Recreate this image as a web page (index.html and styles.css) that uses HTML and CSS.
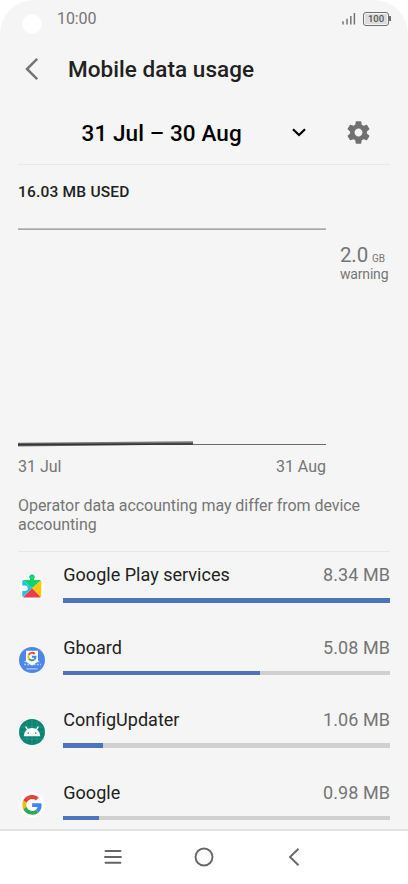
FILE: index.html
```html
<!DOCTYPE html>
<html lang="en">
<head>
<meta charset="utf-8">
<title>Mobile data usage</title>
<link rel="stylesheet" href="styles.css">
</head>
<body>
<div class="phone">
  <header class="status">
    <span class="camera"></span>
    <span class="clock">10:00</span>
    <svg class="signal" width="14" height="13" viewBox="0 0 14 13"><path d="M1 9.200V12.500M5 6.800V12.500M8.800 4V12.500M12.400 1V12.500" fill="none" stroke="#747474" stroke-width="1.500"/></svg>
    <span class="battery"><span class="charge">100</span></span>
  </header>
  <div class="titlebar">
    <svg class="back" width="14" height="24" viewBox="0 0 14 24"><path d="M13.200 1.800L3 12L13.200 22.200" fill="none" stroke="#757575" stroke-width="2.500"/></svg>
    <h1>Mobile data usage</h1>
  </div>
  <div class="cycle">
    <span class="range">31 Jul – 30 Aug</span>
    <svg class="chevron" width="14" height="9" viewBox="0 0 14 9"><path d="M1 1.200L7 7L13 1.200" fill="none" stroke="#000" stroke-width="2.200"/></svg>
    <svg class="gear" width="27" height="27" viewBox="0 0 24 24"><path fill="#707070" d="M19.430 12.980c.04-.32.07-.64.07-.98s-.03-.66-.07-.98l2.110-1.650c.19-.15.24-.42.12-.64l-2-3.460c-.12-.22-.39-.3-.61-.22l-2.490 1c-.52-.4-1.080-.73-1.690-.98l-.38-2.650C14.460 2.180 14.250 2 14 2h-4c-.25 0-.46.18-.49.42l-.38 2.650c-.61.25-1.170.59-1.690.98l-2.490-1c-.23-.09-.49 0-.61.22l-2 3.460c-.13.22-.07.49.12.64l2.110 1.650c-.04.32-.07.65-.07.98s.03.66.07.98l-2.110 1.650c-.19.15-.24.42-.12.64l2 3.460c.12.22.39.3.61.22l2.490-1c.52.4 1.080.73 1.690.98l.38 2.650c.03.24.24.42.49.42h4c.25 0 .46-.18.49-.42l.38-2.650c.61-.25 1.170-.59 1.690-.98l2.490 1c.23.09.49 0 .61-.22l2-3.460c.12-.22.07-.49-.12-.64l-2.110-1.650zM12 15.500c-1.930 0-3.500-1.570-3.500-3.500s1.570-3.500 3.500-3.500 3.500 1.570 3.500 3.500-1.570 3.500-3.500 3.500z"/></svg>
  </div>
  <section class="usage">
    <div class="used">16.03 MB USED</div>
    <div class="plot">
      <svg class="graph" width="308" height="220" viewBox="0 0 308 220"><path d="M0 2.200H308" stroke="#8c8c8c" stroke-width="1.300"/><path d="M0 217.500H308" stroke="#6b6b6b" stroke-width="1"/><path d="M0 215.800L175 214.200V217.600L0 219.500Z" fill="#777"/><path d="M0 216.800L175 216.200V217.700L0 218.500Z" fill="#333"/></svg>
      <div class="limit"><div><span class="amount">2.0</span> <span class="unit">GB</span></div><div class="warning">warning</div></div>
    </div>
    <div class="dates"><span>31 Jul</span><span>31 Aug</span></div>
    <p class="note">Operator data accounting may differ from device accounting</p>
  </section>
  <main class="apps">
    <div class="app">
      <svg class="icon" width="26" height="26" viewBox="0 0 26 26"><circle cx="13" cy="13" r="12.800" fill="#fff"/><clipPath id="puzzle"><path d="M4.500 6H11V4.800A2.700 2.700 0 1 1 15 4.800V6H20.500Q22.500 6 22.500 8V21.500Q22.500 23.500 20.500 23.500H5Q3.300 23.500 3.300 21.500V17H6A2.600 2.600 0 0 0 6 11.500H3.300V7.500Q3.300 6 4.500 6Z"/></clipPath><g clip-path="url(#puzzle)"><path d="M3 0H23V5.500L13 14.300L3 5.500Z" fill="#12d36f"/><path d="M3 5.500L13 14.300L3 24Z" fill="#16c4e8"/><path d="M22.500 5.500V24L13 14.300Z" fill="#fec70a"/><path d="M3 24.500H23L13 14.300Z" fill="#f03a49"/></g></svg>
      <div class="detail"><div class="line"><span class="name">Google Play services</span><span class="size">8.34 MB</span></div><div class="track"><div class="fill" style="width:100%"></div></div></div>
    </div>
    <div class="app">
      <svg class="icon" width="26" height="26" viewBox="0 0 26 26"><circle cx="13" cy="13" r="13" fill="#4c86e8"/><path d="M5.500 14.500H21M5 17.500H22" stroke="#b5d0ff" stroke-width="1.500" stroke-dasharray="2 1.200"/><path d="M7.500 21.800H18.500" stroke="#9ec1fc" stroke-width="1.500"/><path d="M7 3.800H19V14.500Q18 15.500 13 18.500Q8 15.500 7 14.500Z" fill="#fff"/><g fill="none" stroke-width="2"><path d="M15.700 7A3.600 3.600 0 0 0 9.800 7.900" stroke="#e84d3d"/><path d="M9.800 7.900A3.600 3.600 0 0 0 9.900 11.700" stroke="#f6bd17"/><path d="M9.900 11.700A3.600 3.600 0 0 0 15.200 12.500" stroke="#34a853"/><path d="M15.200 12.500Q16.500 11.500 16.500 9.800H13" stroke="#4285f4"/></g></svg>
      <div class="detail"><div class="line"><span class="name">Gboard</span><span class="size">5.08 MB</span></div><div class="track"><div class="fill" style="width:60.200%"></div></div></div>
    </div>
    <div class="app">
      <svg class="icon" width="26" height="26" viewBox="0 0 26 26"><circle cx="13" cy="13" r="13" fill="#078574"/><path d="M8 1.500V24.500M13 0V26M18 1.500V24.500M1.500 8H24.500M0 13H26M1.500 20H24.500" stroke="#389c8e" stroke-width=".6"/><path d="M4.700 17.300A8.300 8.300 0 0 1 21.300 17.300Z" fill="#fff"/><path d="M8.700 10.800L6.600 7.500M17.300 10.800L19.400 7.500" stroke="#fff" stroke-width="1.300"/><circle cx="9.300" cy="14" r=".8" fill="#078574"/><circle cx="16.700" cy="14" r=".8" fill="#078574"/></svg>
      <div class="detail"><div class="line"><span class="name">ConfigUpdater</span><span class="size">1.06 MB</span></div><div class="track"><div class="fill" style="width:12.100%"></div></div></div>
    </div>
    <div class="app">
      <svg class="icon" width="26" height="26" viewBox="0 0 26 26"><circle cx="13" cy="13" r="12.800" fill="#fff"/><svg x="3.200" y="2.800" width="19.800" height="20.200" viewBox="0 0 48 48"><path fill="#ea4335" d="M24 9.500c3.540 0 6.710 1.220 9.210 3.600l6.850-6.850C35.900 2.380 30.470 0 24 0 14.620 0 6.510 5.380 2.560 13.220l7.980 6.190C12.430 13.720 17.740 9.500 24 9.500z"/><path fill="#4285f4" d="M46.980 24.550c0-1.570-.15-3.090-.38-4.550H24v9.020h12.940c-.58 2.960-2.260 5.480-4.780 7.180l7.730 6c4.510-4.180 7.090-10.360 7.090-17.650z"/><path fill="#fbbc05" d="M10.530 28.590c-.48-1.450-.76-2.990-.76-4.590s.27-3.140.76-4.590l-7.980-6.190C.92 16.460 0 20.120 0 24c0 3.880.92 7.540 2.560 10.780l7.970-6.190z"/><path fill="#34a853" d="M24 48c6.480 0 11.930-2.130 15.890-5.810l-7.730-6c-2.150 1.450-4.920 2.300-8.160 2.300-6.260 0-11.570-4.220-13.470-9.910l-7.980 6.190C6.510 42.620 14.620 48 24 48z"/></svg></svg>
      <div class="detail"><div class="line"><span class="name">Google</span><span class="size">0.98 MB</span></div><div class="track"><div class="fill" style="width:11.100%"></div></div></div>
    </div>
  </main>
  <nav class="nav">
    <svg width="18" height="16" viewBox="0 0 18 16"><path d="M1.500 2H16.500M1 8H17M1.500 13.800H16.500" stroke="#666" stroke-width="1.900" stroke-linecap="round"/></svg>
    <svg class="home" width="20" height="20" viewBox="0 0 20 20"><circle cx="10" cy="10" r="8.500" fill="none" stroke="#666" stroke-width="1.900"/></svg>
    <svg width="12" height="20" viewBox="0 0 12 20"><path d="M10.500 1.700L2 10L10.500 18.300" fill="none" stroke="#666" stroke-width="1.900"/></svg>
  </nav>
</div>
</body>
</html>
```
FILE: styles.css
```css
* { box-sizing: border-box; }
body { margin: 0; background: #fff; font-family: Roboto, sans-serif; color: #212121; }
svg { display: block; flex: none; }
.phone { width: 408px; height: 884px; display: flex; flex-direction: column; overflow: hidden; background: #f5f5f5; border-radius: 34px 34px 0 0; white-space: nowrap; }
.status { height: 38px; flex: none; display: flex; align-items: center; padding: 0 17px 1px 21.500px; color: #757575; }
.camera { width: 20px; height: 20px; border-radius: 50%; background: #fff; margin-top: 10px; }
.clock { font-size: 16px; line-height: 20px; margin-left: 15.500px; flex: 1; letter-spacing: -.1px; padding-top: 1px; }
.signal { margin-right: 7px; }
.battery { position: relative; width: 26px; height: 14px; border: 1.5px solid #707070; border-radius: 3px; padding: 1px; margin-right: 2px; }
.battery::after { content: ""; position: absolute; right: -3px; top: 3px; width: 2px; height: 5px; background: #707070; }
.charge { display: block; background: #ddd; height: 100%; font-size: 9.5px; font-weight: 500; line-height: 10px; text-align: center; color: #555; }
.titlebar { height: 62px; flex: none; display: flex; align-items: center; padding-left: 24px; }
.titlebar h1 { margin: 0 0 0 30px; font-size: 22.5px; font-weight: 500; line-height: 30px; letter-spacing: .05px; }
.cycle { height: 65px; flex: none; display: flex; align-items: center; margin: 0 18px; padding-left: 63.500px; border-bottom: 1px solid #e9e9e9; color: #000; }
.range { width: 210.500px; font-size: 22.500px; font-weight: 500; letter-spacing: .1px; padding-top: 1px; }
.gear { margin-left: 38.500px; }
.usage { height: 387px; flex: none; margin: 0 18px; padding-top: 17px; border-bottom: 1px solid #e6e6e6; color: #757575; }
.used { height: 20px; line-height: 20px; font-size: 15.5px; font-weight: 500; color: #212121; letter-spacing: .2px; }
.plot { display: flex; margin-top: 25px; height: 220px; }
.limit { margin: 15px 0 0 14px; }
.amount { font-size: 20.500px; line-height: 26px; letter-spacing: -.15px; }
.unit { font-size: 10px; }
.warning { font-size: 14px; line-height: 13px; letter-spacing: -.18px; }
.dates { display: flex; justify-content: space-between; width: 308px; margin-top: 10px; font-size: 16px; line-height: 20px; }
.note { margin: 20px 0 0; font-size: 16px; line-height: 18.500px; letter-spacing: -.05px; white-space: normal; }
.apps { flex: 1; min-height: 0; overflow: hidden; padding: 0 18px; }
.app { height: 72.500px; display: flex; }
.icon { margin: 22px 18.500px 0 .5px; }
.detail { flex: 1; padding-top: 11px; }
.line { display: flex; justify-content: space-between; font-size: 18px; line-height: 24px; }
.name { margin-left: .3px; letter-spacing: .02px; }
.size { color: #757575; letter-spacing: .06px; }
.track { margin-top: 11px; height: 4.500px; background: #d0d0d0; }
.fill { height: 100%; background: #4e73bd; }
.nav { height: 55px; flex: none; display: flex; align-items: center; justify-content: space-between; padding: 0 108px 2px 104px; background: #fff; border-top: 2px solid #e2e2e2; }
.home { margin-right: 3px; }
```
